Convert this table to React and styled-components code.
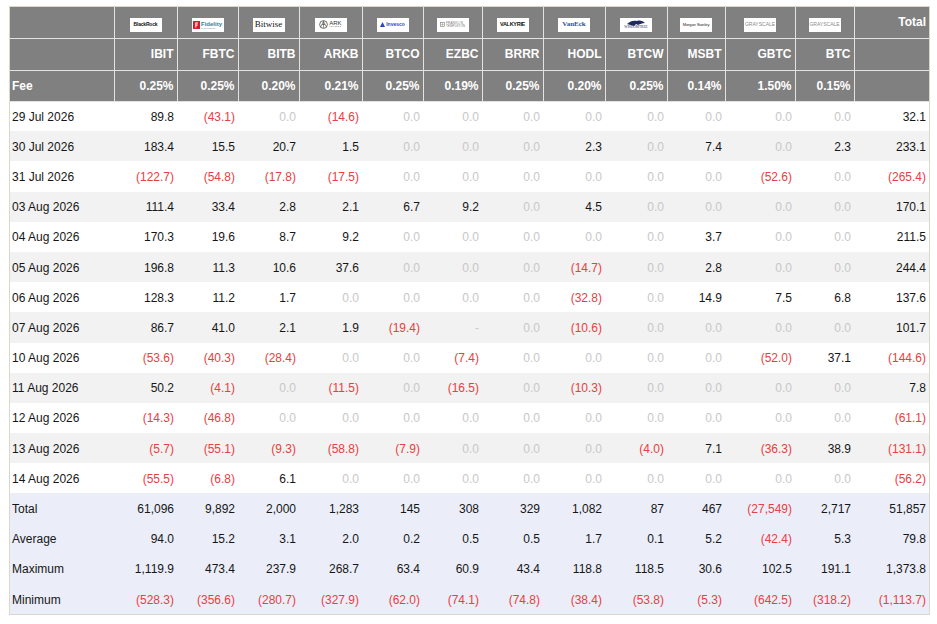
import React from 'react'
import styled, { createGlobalStyle } from 'styled-components'

const GlobalStyle = createGlobalStyle`
  body {
    margin: 0;
    background: #ffffff;
    font-family: "Liberation Sans", Arial, sans-serif;
  }
`

const COLUMNS = [
  { key: 'IBIT', w: 63, fee: '0.25%', logo: 'blackrock' },
  { key: 'FBTC', w: 61, fee: '0.25%', logo: 'fidelity' },
  { key: 'BITB', w: 61, fee: '0.20%', logo: 'bitwise' },
  { key: 'ARKB', w: 63, fee: '0.21%', logo: 'ark' },
  { key: 'BTCO', w: 61, fee: '0.25%', logo: 'invesco' },
  { key: 'EZBC', w: 59, fee: '0.19%', logo: 'franklin' },
  { key: 'BRRR', w: 61, fee: '0.25%', logo: 'valkyrie' },
  { key: 'HODL', w: 62, fee: '0.20%', logo: 'vaneck' },
  { key: 'BTCW', w: 62, fee: '0.25%', logo: 'wisdomtree' },
  { key: 'MSBT', w: 58, fee: '0.14%', logo: 'morgan' },
  { key: 'GBTC', w: 70, fee: '1.50%', logo: 'grayscale' },
  { key: 'BTC', w: 59, fee: '0.15%', logo: 'grayscale' },
]

const DAYS = [
  ['29 Jul 2026', '89.8', '(43.1)', '0.0', '(14.6)', '0.0', '0.0', '0.0', '0.0', '0.0', '0.0', '0.0', '0.0', '32.1'],
  ['30 Jul 2026', '183.4', '15.5', '20.7', '1.5', '0.0', '0.0', '0.0', '2.3', '0.0', '7.4', '0.0', '2.3', '233.1'],
  ['31 Jul 2026', '(122.7)', '(54.8)', '(17.8)', '(17.5)', '0.0', '0.0', '0.0', '0.0', '0.0', '0.0', '(52.6)', '0.0', '(265.4)'],
  ['03 Aug 2026', '111.4', '33.4', '2.8', '2.1', '6.7', '9.2', '0.0', '4.5', '0.0', '0.0', '0.0', '0.0', '170.1'],
  ['04 Aug 2026', '170.3', '19.6', '8.7', '9.2', '0.0', '0.0', '0.0', '0.0', '0.0', '3.7', '0.0', '0.0', '211.5'],
  ['05 Aug 2026', '196.8', '11.3', '10.6', '37.6', '0.0', '0.0', '0.0', '(14.7)', '0.0', '2.8', '0.0', '0.0', '244.4'],
  ['06 Aug 2026', '128.3', '11.2', '1.7', '0.0', '0.0', '0.0', '0.0', '(32.8)', '0.0', '14.9', '7.5', '6.8', '137.6'],
  ['07 Aug 2026', '86.7', '41.0', '2.1', '1.9', '(19.4)', '-', '0.0', '(10.6)', '0.0', '0.0', '0.0', '0.0', '101.7'],
  ['10 Aug 2026', '(53.6)', '(40.3)', '(28.4)', '0.0', '0.0', '(7.4)', '0.0', '0.0', '0.0', '0.0', '(52.0)', '37.1', '(144.6)'],
  ['11 Aug 2026', '50.2', '(4.1)', '0.0', '(11.5)', '0.0', '(16.5)', '0.0', '(10.3)', '0.0', '0.0', '0.0', '0.0', '7.8'],
  ['12 Aug 2026', '(14.3)', '(46.8)', '0.0', '0.0', '0.0', '0.0', '0.0', '0.0', '0.0', '0.0', '0.0', '0.0', '(61.1)'],
  ['13 Aug 2026', '(5.7)', '(55.1)', '(9.3)', '(58.8)', '(7.9)', '0.0', '0.0', '0.0', '(4.0)', '7.1', '(36.3)', '38.9', '(131.1)'],
  ['14 Aug 2026', '(55.5)', '(6.8)', '6.1', '0.0', '0.0', '0.0', '0.0', '0.0', '0.0', '0.0', '0.0', '0.0', '(56.2)'],
]

const SUMMARY = [
  ['Total', '61,096', '9,892', '2,000', '1,283', '145', '308', '329', '1,082', '87', '467', '(27,549)', '2,717', '51,857'],
  ['Average', '94.0', '15.2', '3.1', '2.0', '0.2', '0.5', '0.5', '1.7', '0.1', '5.2', '(42.4)', '5.3', '79.8'],
  ['Maximum', '1,119.9', '473.4', '237.9', '268.7', '63.4', '60.9', '43.4', '118.8', '118.5', '30.6', '102.5', '191.1', '1,373.8'],
  ['Minimum', '(528.3)', '(356.6)', '(280.7)', '(327.9)', '(62.0)', '(74.1)', '(74.8)', '(38.4)', '(53.8)', '(5.3)', '(642.5)', '(318.2)', '(1,113.7)'],
]

const toneOf = v => {
  if (v.startsWith('(')) return 'neg'
  if (v === '0.0' || v === '-') return 'zero'
  return 'pos'
}

const TONES = {
  neg: '#e8403f',
  zero: '#c8c8c8',
  pos: '#161616',
}

const Page = styled.div`
  padding: 6px 0 0 9px;
`

const Frame = styled.div`
  width: 919px;
  border: 1px solid #dcd7cb;
`

const Grid = styled.table`
  width: 100%;
  border-collapse: collapse;
  table-layout: fixed;
`

const Col = styled.col`
  width: ${p => p.$w}px;
`

const HeadRow = styled.tr`
  height: ${p => p.$h}px;
`

const HeadCell = styled.th`
  background: #808080;
  color: #ffffff;
  font-size: 12px;
  font-weight: 700;
  text-align: ${p => (p.$left ? 'left' : 'right')};
  padding: 0 3px 0 ${p => (p.$left ? 2 : 3)}px;
  vertical-align: middle;
  border-right: 1px solid #e2e2e2;
  border-bottom: 1px solid #e2e2e2;
  white-space: nowrap;

  &:last-child {
    border-right: none;
  }
`

const LogoCell = styled(HeadCell)`
  text-align: center;
  padding-top: 4px;
`

const BodyRow = styled.tr`
  height: 30.2px;
  background: ${p => (p.$summary ? '#ebeef9' : p.$stripe ? '#f2f2f2' : '#ffffff')};
`

const Cell = styled.td`
  font-size: 12px;
  padding: 1px 3px 0;
  text-align: right;
  color: ${p => TONES[p.$tone]};
  white-space: nowrap;
`

const DateCell = styled(Cell)`
  text-align: left;
  padding-left: 2px;
  color: #161616;
`

const LogoBox = styled.div`
  display: inline-flex;
  align-items: center;
  justify-content: center;
  gap: 1px;
  width: 32px;
  height: 14px;
  background: #ffffff;
  vertical-align: middle;
  overflow: hidden;
`

const LogoWord = styled.span`
  font-family: ${p => (p.$serif ? '"Liberation Serif", serif' : '"Liberation Sans", Arial, sans-serif')};
  font-size: ${p => p.$size}px;
  font-weight: ${p => (p.$bold ? 700 : 400)};
  color: ${p => p.$color || '#111'};
  letter-spacing: ${p => p.$track || 0}px;
  line-height: 1;
  white-space: nowrap;
`

const LogoStack = styled.span`
  display: flex;
  flex-direction: column;
  align-items: ${p => p.$align || 'flex-start'};
  line-height: 1;
`

const Logo = ({ name }) => {
  switch (name) {
    case 'blackrock':
      return (
        <LogoBox>
          <LogoWord $size={5} $bold $track={-0.2}>BlackRock</LogoWord>
        </LogoBox>
      )
    case 'fidelity':
      return (
        <LogoBox>
          <svg width="7" height="8" viewBox="0 0 7 8">
            <rect width="7" height="8" fill="#d0202b" />
            <path d="M2.3 1.6h2.6v1H3.3v1h1.4v1H3.3v2H2.3z" fill="#fff" />
          </svg>
          <LogoStack>
            <LogoWord $size={6} $bold $color="#3b7a9a">Fidelity</LogoWord>
            <LogoWord $size={2} $color="#7a9aaa">INVESTMENTS</LogoWord>
          </LogoStack>
        </LogoBox>
      )
    case 'bitwise':
      return (
        <LogoBox>
          <LogoWord $serif $size={9}>Bitwise</LogoWord>
        </LogoBox>
      )
    case 'ark':
      return (
        <LogoBox>
          <svg width="9" height="9" viewBox="0 0 10 10">
            <circle cx="5" cy="5" r="4.3" fill="none" stroke="#333" strokeWidth="0.8" />
            <path d="M2 7.5L5 1.5L8 7.5M3.2 5h3.6M5 1.5V8.6" fill="none" stroke="#333" strokeWidth="0.6" />
          </svg>
          <LogoStack>
            <LogoWord $size={6} $color="#333">ARK</LogoWord>
            <LogoWord $size={2.5} $color="#555" $track={0.6}>INVEST</LogoWord>
          </LogoStack>
        </LogoBox>
      )
    case 'invesco':
      return (
        <LogoBox>
          <svg width="5" height="5" viewBox="0 0 6 6">
            <path d="M0 6L3 0L6 6z" fill="#2a3fd6" />
          </svg>
          <LogoWord $size={5} $bold $color="#2a3fd6">Invesco</LogoWord>
        </LogoBox>
      )
    case 'franklin':
      return (
        <LogoBox>
          <svg width="5" height="5" viewBox="0 0 6 6">
            <rect x="0.5" y="0.5" width="5" height="5" fill="none" stroke="#888" strokeWidth="0.8" />
            <path d="M3 1.2v3.6M1.5 3h3" stroke="#888" strokeWidth="0.6" />
          </svg>
          <LogoStack>
            <LogoWord $size={3} $color="#777" $track={0.3}>FRANKLIN</LogoWord>
            <LogoWord $size={3} $color="#777" $track={0.1}>TEMPLETON</LogoWord>
          </LogoStack>
        </LogoBox>
      )
    case 'valkyrie':
      return (
        <LogoBox>
          <LogoWord $size={5.5} $bold $track={-0.3}>VALKYRIE</LogoWord>
        </LogoBox>
      )
    case 'vaneck':
      return (
        <LogoBox>
          <LogoWord $serif $size={7} $bold $color="#2a4f9e">VanEck</LogoWord>
        </LogoBox>
      )
    case 'wisdomtree':
      return (
        <LogoBox>
          <LogoStack $align="center">
            <svg width="20" height="6" viewBox="0 0 20 6">
              <path d="M1 4C4 1 8 0 11 1C14 0 17 1 19 3C16 3 14 4 12 5L10 4L8 6C6 5 3 5 1 4z" fill="#1f2a5c" />
            </svg>
            <LogoWord $serif $size={3.5} $color="#1f2a5c">WISDOMTREE</LogoWord>
          </LogoStack>
        </LogoBox>
      )
    case 'morgan':
      return (
        <LogoBox>
          <LogoWord $size={4} $color="#222" $track={-0.1}>Morgan Stanley</LogoWord>
        </LogoBox>
      )
    default:
      return (
        <LogoBox>
          <LogoWord $size={5} $color="#8a8a8a">GRAYSCALE</LogoWord>
        </LogoBox>
      )
  }
}

export default function App() {
  return (
    <>
      <GlobalStyle />
      <Page>
        <Frame>
          <Grid>
            <colgroup>
              <Col $w={104} />
              {COLUMNS.map(c => (
                <Col key={c.key} $w={c.w} />
              ))}
              <Col $w={75} />
            </colgroup>
            <thead>
              <HeadRow $h={31}>
                <HeadCell />
                {COLUMNS.map(c => (
                  <LogoCell key={c.key}>
                    <Logo name={c.logo} />
                  </LogoCell>
                ))}
                <HeadCell>Total</HeadCell>
              </HeadRow>
              <HeadRow $h={32}>
                <HeadCell />
                {COLUMNS.map(c => (
                  <HeadCell key={c.key}>{c.key}</HeadCell>
                ))}
                <HeadCell />
              </HeadRow>
              <HeadRow $h={31}>
                <HeadCell $left>Fee</HeadCell>
                {COLUMNS.map(c => (
                  <HeadCell key={c.key}>{c.fee}</HeadCell>
                ))}
                <HeadCell />
              </HeadRow>
            </thead>
            <tbody>
              {DAYS.map(([date, ...values], i) => (
                <BodyRow key={date} $stripe={i % 2 === 1}>
                  <DateCell>{date}</DateCell>
                  {values.map((v, j) => (
                    <Cell key={j} $tone={toneOf(v)}>{v}</Cell>
                  ))}
                </BodyRow>
              ))}
              {SUMMARY.map(([label, ...values]) => (
                <BodyRow key={label} $summary>
                  <DateCell>{label}</DateCell>
                  {values.map((v, j) => (
                    <Cell key={j} $tone={v.startsWith('(') ? 'neg' : 'pos'}>{v}</Cell>
                  ))}
                </BodyRow>
              ))}
            </tbody>
          </Grid>
        </Frame>
      </Page>
    </>
  )
}
